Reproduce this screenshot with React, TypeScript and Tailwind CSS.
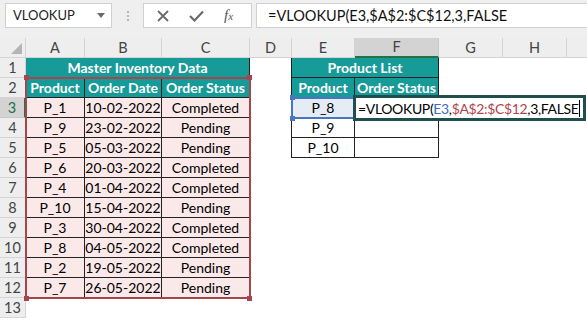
import React from "react";

const FONT = { fontFamily: "Lato, 'Open Sans', sans-serif" };

type CellProps = { w: string; cls?: string; children?: React.ReactNode };
function Cell({ w, cls = "", children }: CellProps) {
  return (
    <div className={`${w} shrink-0 h-full flex items-center justify-center whitespace-nowrap ${cls}`}>
      {children}
    </div>
  );
}

function RowHead({ n, active }: { n: number; active?: boolean }) {
  return (
    <div
      className={`w-[26px] shrink-0 h-full flex items-center justify-center border-r border-b text-[14.5px] ${
        active
          ? "bg-[#d3d3d3] border-r-[#217346] border-r-2 border-b-[#c8c8c8] text-[#217346]"
          : "bg-[#eeeeee] border-[#d4d4d4] text-[#444]"
      }`}
    >
      {n}
    </div>
  );
}

const TEAL = "bg-[#179b99] text-white font-bold";
const PINK = "bg-[#fbe9e9] text-black";
const B = "border-r border-b border-[#222]";

const data = [
  ["P_1", "10-02-2022", "Completed"],
  ["P_9", "23-02-2022", "Pending"],
  ["P_5", "05-03-2022", "Pending"],
  ["P_6", "20-03-2022", "Completed"],
  ["P_4", "01-04-2022", "Completed"],
  ["P_10", "15-04-2022", "Pending"],
  ["P_3", "30-04-2022", "Completed"],
  ["P_8", "04-05-2022", "Completed"],
  ["P_2", "19-05-2022", "Pending"],
  ["P_7", "26-05-2022", "Pending"],
];

const listE = ["P_8", "P_9", "P_10"];

export default function App() {
  return (
    <div className="relative w-[587px] h-[318px] overflow-hidden bg-white text-[14px] text-black" style={FONT}>
      {/* Formula bar */}
      <div className="h-[38px] bg-[#efefef] flex items-start pt-[3px] pl-[5px]">
        <div className="w-[107px] h-[25px] bg-white border border-[#d0d0d0] flex items-center pl-[7px] pr-[6px] justify-between">
          <span className="text-[13px] text-[#222]">VLOOKUP</span>
          <svg width="8" height="5" viewBox="0 0 8 5">
            <path d="M0 0 L8 0 L4 5 Z" fill="#6a6a6a" />
          </svg>
        </div>
        <div className="w-[31px] h-[25px] flex flex-col items-center justify-center gap-[2px]">
          <div className="w-[2px] h-[2px] bg-[#b5b5b5]" />
          <div className="w-[2px] h-[2px] bg-[#b5b5b5]" />
          <div className="w-[2px] h-[2px] bg-[#b5b5b5]" />
        </div>
        <div className="w-[109px] h-[25px] bg-white border border-[#d0d0d0] flex items-center pl-[13px] gap-[20px]">
          <svg width="12" height="12" viewBox="0 0 12 12">
            <path d="M1 1 L11 11 M11 1 L1 11" stroke="#6b6b6b" strokeWidth="1.8" />
          </svg>
          <svg width="15" height="12" viewBox="0 0 15 12">
            <path d="M1 6 L5.5 10.5 L14 1.5" stroke="#6b6b6b" strokeWidth="2.2" fill="none" />
          </svg>
          <span className="text-[15px] italic text-[#555] leading-none" style={{ fontFamily: "'Liberation Serif', serif" }}>
            f<span className="text-[11px]">x</span>
          </span>
        </div>
        <div className="ml-[4px] flex-1 h-[25px] bg-white border border-[#d0d0d0] border-r-0 flex items-center pl-[11px]">
          <span className="text-[14.5px] text-[#111]">=VLOOKUP(E3,$A$2:$C$12,3,FALSE</span>
        </div>
      </div>

      {/* Column headers */}
      <div className="flex h-[20px] bg-[#eeeeee] text-[14.5px] text-[#444]">
        <div className="w-[26px] shrink-0 h-full border-r border-b border-[#d4d4d4] relative">
          <svg className="absolute right-[3px] bottom-[3px]" width="11" height="11" viewBox="0 0 11 11">
            <path d="M11 0 L11 11 L0 11 Z" fill="#b4b4b4" />
          </svg>
        </div>
        <Cell w="w-[59px]" cls="border-r border-b border-[#d4d4d4]">A</Cell>
        <Cell w="w-[77px]" cls="border-r border-b border-[#d4d4d4]">B</Cell>
        <Cell w="w-[88px]" cls="border-r border-b border-[#d4d4d4]">C</Cell>
        <Cell w="w-[42px]" cls="border-r border-b border-[#d4d4d4]">D</Cell>
        <Cell w="w-[63px]" cls="border-r border-b border-[#d4d4d4]">E</Cell>
        <Cell w="w-[84px]" cls="bg-[#d3d3d3] border-r border-[#c8c8c8] border-b-2 border-b-[#217346]">F</Cell>
        <Cell w="w-[64px]" cls="border-r border-b border-[#d4d4d4]">G</Cell>
        <Cell w="w-[64px]" cls="border-r border-b border-[#d4d4d4]">H</Cell>
        <Cell w="w-[40px]" cls="border-b border-[#d4d4d4]"></Cell>
      </div>

      {/* Row 1 */}
      <div className="flex h-[20px]">
        <RowHead n={1} />
        <Cell w="w-[224px]" cls={`${TEAL} ${B}`}>Master Inventory Data</Cell>
        <Cell w="w-[42px]" cls="border-r border-[#222]"></Cell>
        <Cell w="w-[147px]" cls={`${TEAL} ${B}`}>Product List</Cell>
      </div>

      {/* Row 2 */}
      <div className="flex h-[20px]">
        <RowHead n={2} />
        <Cell w="w-[59px]" cls={`${TEAL} ${B}`}>Product</Cell>
        <Cell w="w-[77px]" cls={`${TEAL} ${B}`}>Order Date</Cell>
        <Cell w="w-[88px]" cls={`${TEAL} ${B}`}>Order Status</Cell>
        <Cell w="w-[42px]" cls="border-r border-[#222]"></Cell>
        <Cell w="w-[63px]" cls={`${TEAL} ${B}`}>Product</Cell>
        <Cell w="w-[84px]" cls={`${TEAL} ${B}`}>Order Status</Cell>
      </div>

      {/* Data rows */}
      {data.map((r, i) => {
        const n = i + 3;
        const e = listE[i];
        return (
          <div key={n} className="flex h-[20px]">
            <RowHead n={n} active={n === 3} />
            <Cell w="w-[59px]" cls={`${PINK} ${B}`}>{r[0]}</Cell>
            <Cell w="w-[77px]" cls={`${PINK} ${B}`}>{r[1]}</Cell>
            <Cell w="w-[88px]" cls={`${PINK} ${B}`}>{r[2]}</Cell>
            {e !== undefined ? (
              <>
                <Cell w="w-[42px]" cls="border-r border-[#222]"></Cell>
                <Cell w="w-[63px]" cls={`${B} ${n === 3 ? "bg-[#e6ecf5]" : ""}`}>{e}</Cell>
                <Cell w="w-[84px]" cls={B}></Cell>
              </>
            ) : null}
          </div>
        );
      })}

      {/* Row 13 */}
      <div className="flex h-[20px]">
        <RowHead n={13} />
      </div>

      {/* Range reference A2:C12 */}
      <div className="absolute left-[25px] top-[77px] w-[226px] h-[222px] border-2 border-[#a5454e] pointer-events-none" />
      <div className="absolute left-[24px] top-[75px] w-[5px] h-[5px] bg-[#a5454e]" />
      <div className="absolute left-[247px] top-[75px] w-[5px] h-[5px] bg-[#a5454e]" />
      <div className="absolute left-[24px] top-[296px] w-[5px] h-[5px] bg-[#a5454e]" />
      <div className="absolute left-[247px] top-[296px] w-[5px] h-[5px] bg-[#a5454e]" />

      {/* Reference E3 */}
      <div className="absolute left-[291px] top-[97px] w-[65px] h-[22px] border-2 border-[#4a76c0]" />
      <div className="absolute left-[290px] top-[95px] w-[5px] h-[5px] bg-[#4a76c0]" />
      <div className="absolute left-[290px] top-[116px] w-[5px] h-[5px] bg-[#4a76c0]" />

      {/* Editing cell F3 */}
      <div className="absolute left-[353px] top-[95px] h-[26px] border-[3px] border-[#1f4e4e] bg-white flex items-center pl-[2px] pr-[3px] whitespace-nowrap text-[14px] tracking-[-0.35px]">
        <span>
          =VLOOKUP(<span className="text-[#3b6ec0]">E3</span>,<span className="text-[#b0444e]">$A$2:$C$12</span>,3,FALSE
        </span>
        <span className="inline-block w-[1px] h-[17px] bg-black ml-[1px]" />
      </div>
    </div>
  );
}
